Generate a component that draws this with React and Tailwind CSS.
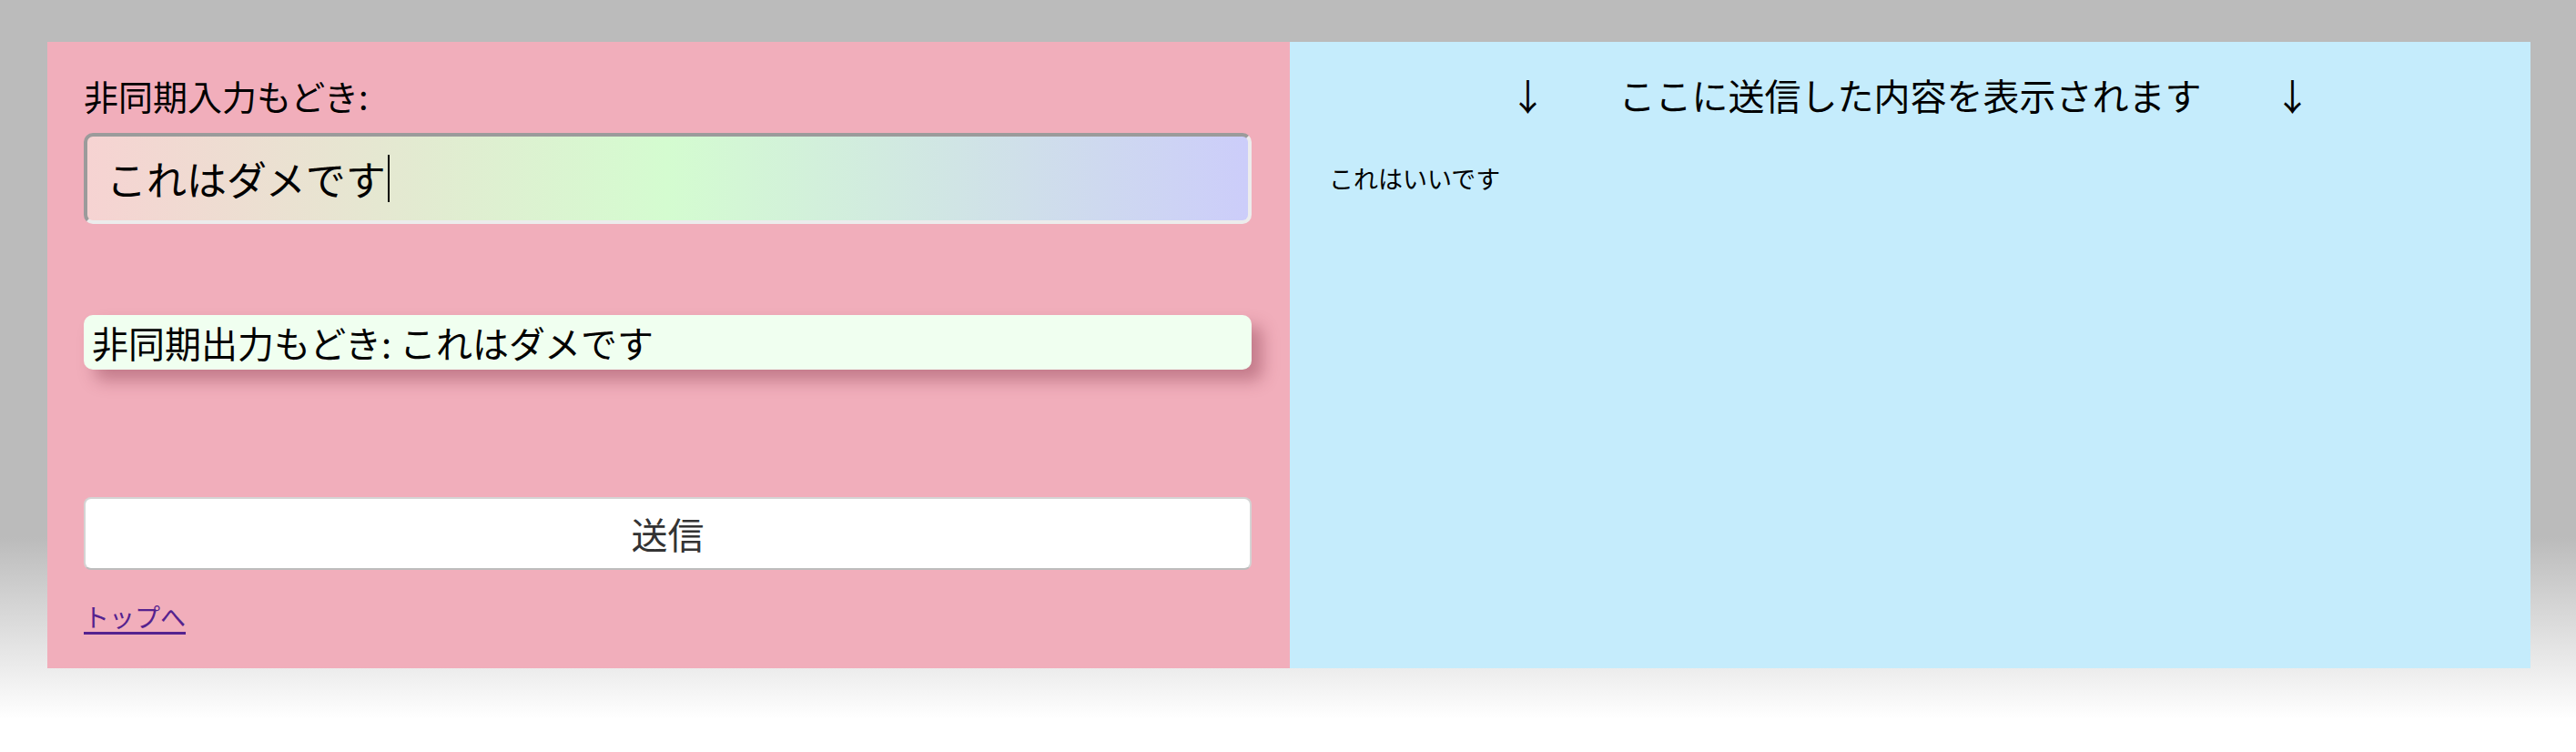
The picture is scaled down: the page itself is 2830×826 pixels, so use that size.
// App.jsx
const jp = { fontFamily: '"Noto Sans CJK JP", "Noto Sans", sans-serif' };

function InputPanel() {
  return (
    <div className="w-[1365px] shrink-0 bg-[#f1aebb] pt-[35px] pl-[40px] pr-[42px]">
      <div className="text-[38px] leading-[48px] text-black">非同期入力もどき:</div>

      {/* 入力欄 (見た目だけ) */}
      <div className="mt-[17px] h-[100px] flex items-center rounded-[10px] border-[4px] border-t-[#9b9b9b] border-l-[#9b9b9b] border-r-[#ececec] border-b-[#ececec] bg-[linear-gradient(to_right,#f6d3d2,#d4fcd0_50%,#cccdfa)] pl-[21px]">
        <span className="text-[44px] leading-[52px] text-black">これはダメです</span>
        <span className="ml-[2px] w-[2px] h-[52px] bg-black" />
      </div>

      <div className="mt-[100px] h-[60px] rounded-[10px] bg-[#f0fff0] pl-[9px] text-[40px] leading-[60px] text-black shadow-[12px_12px_18px_rgba(110,30,50,0.35)]">
        非同期出力もどき: これはダメです
      </div>

      <button className="mt-[140px] w-full h-[80px] rounded-[8px] border-[2px] border-[#d4d4d4] border-b-[#bdbdbd] bg-white text-[40px] leading-[52px] text-[#333333]">
        送信
      </button>

      <div className="mt-[31px]">
        <a href="#" className="text-[28px] leading-[40px] text-[#55228f] underline underline-offset-[5px] decoration-[3px]">
          トップへ
        </a>
      </div>
    </div>
  );
}

function ResultPanel() {
  return (
    <div className="flex-1 bg-[#c5ecfc] pt-[34px] pl-[43px]">
      <div className="flex justify-center gap-[80px] text-[40px] leading-[48px] text-black pr-[43px]">
        <span className="w-[40px] text-center">↓</span>
        <span>ここに送信した内容を表示されます</span>
        <span className="w-[40px] text-center">↓</span>
      </div>
      <div className="mt-[50px] text-[27px] leading-[36px] text-black">これはいいです</div>
    </div>
  );
}

export default function App() {
  return (
    <div
      className="w-full h-[826px] pt-[46px] pl-[52px] pr-[50px] bg-[linear-gradient(to_bottom,#bbbbbb_590px,#ffffff_790px)]"
      style={jp}
    >
      <div className="flex h-[688px]">
        <InputPanel />
        <ResultPanel />
      </div>
    </div>
  );
}
